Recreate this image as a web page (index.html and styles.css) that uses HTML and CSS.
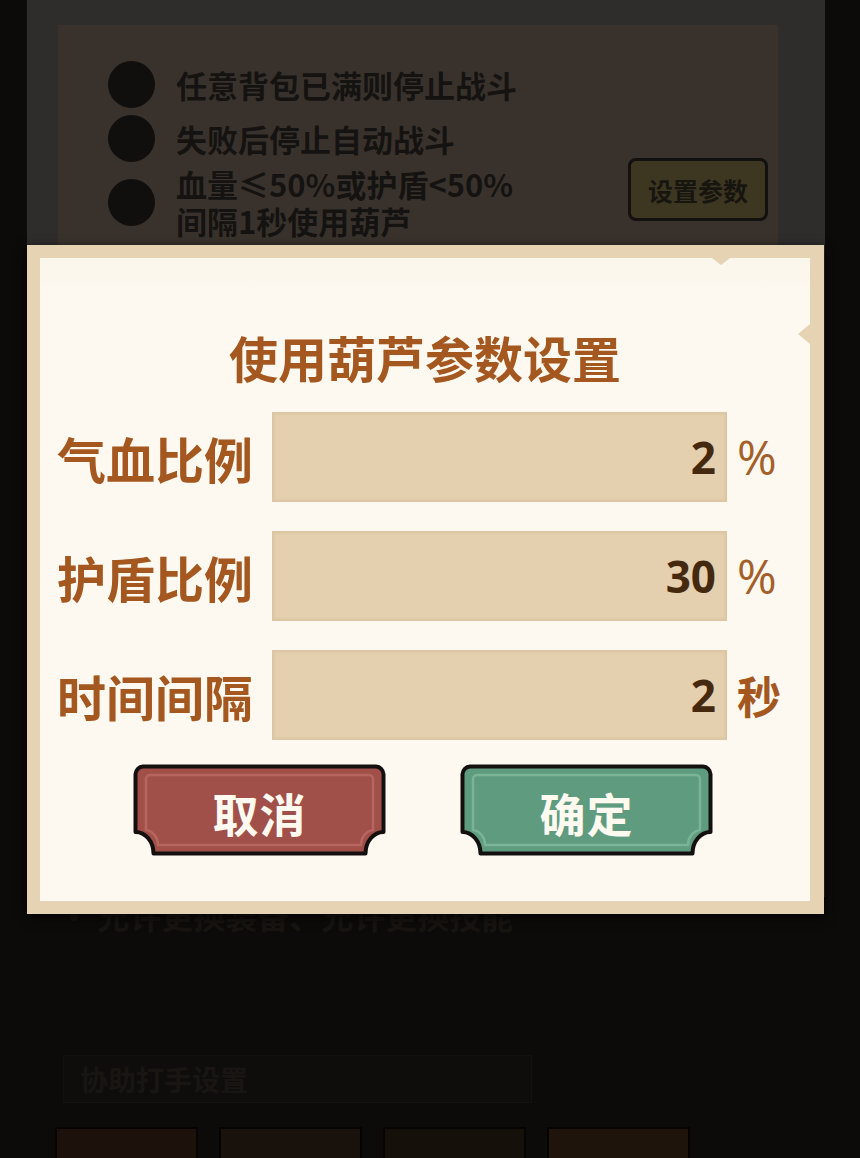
FILE: index.html
```html
<!DOCTYPE html>
<html lang="zh-CN">
<head>
<meta charset="utf-8">
<title>使用葫芦参数设置</title>
<link rel="stylesheet" href="styles.css">
</head>
<body>
<div class="screen">
  <div class="bg-top">
    <div class="panel">
      <div class="opts">
        <div class="opt"><span class="dot"></span><span class="opt-text">任意背包已满则停止战斗</span></div>
        <div class="opt"><span class="dot"></span><span class="opt-text">失败后停止自动战斗</span></div>
        <div class="opt"><span class="dot"></span><span class="opt-text"><span class="ln">血量≤50%或护盾&lt;50%</span><span class="ln">间隔1秒使用葫芦</span></span></div>
      </div>
      <div class="set-btn">设置参数</div>
    </div>
  </div>
  <div class="bg-bottom">
    <div class="faint-line">· 允许更换装备、允许更换技能</div>
    <div class="assist">协助打手设置</div>
    <div class="tabs">
      <div class="tab t1"></div>
      <div class="tab t2"></div>
      <div class="tab t3"></div>
      <div class="tab t4"></div>
    </div>
  </div>

  <div class="modal">
    <div class="sheet">
      <span class="chip chip-top"></span>
      <span class="chip chip-right"></span>
      <h1 class="title">使用葫芦参数设置</h1>
      <div class="rows">
        <div class="row">
          <div class="label">气血比例</div>
          <div class="field">2</div>
          <div class="unit">%</div>
        </div>
        <div class="row">
          <div class="label">护盾比例</div>
          <div class="field">30</div>
          <div class="unit">%</div>
        </div>
        <div class="row">
          <div class="label">时间间隔</div>
          <div class="field">2</div>
          <div class="unit unit-cjk">秒</div>
        </div>
      </div>
      <div class="actions">
        <div class="btn btn-cancel">
          <svg viewBox="0 0 253 92" preserveAspectRatio="none" aria-hidden="true">
            <path class="btn-face" d="M10 2.5H243A8 8 0 0 1 250.5 10V68A18 21.5 0 0 0 232.5 89.5H20.5A18 21.5 0 0 0 2.5 68V10A8 8 0 0 1 10 2.5Z"/>
            <path class="btn-hi" d="M17 11H236A4 4 0 0 1 240 15V66A14 15 0 0 0 228 81H25A14 15 0 0 0 13 66V15A4 4 0 0 1 17 11Z"/>
          </svg>
          <span>取消</span>
        </div>
        <div class="btn btn-ok">
          <svg viewBox="0 0 253 92" preserveAspectRatio="none" aria-hidden="true">
            <path class="btn-face" d="M10 2.5H243A8 8 0 0 1 250.5 10V68A18 21.5 0 0 0 232.5 89.5H20.5A18 21.5 0 0 0 2.5 68V10A8 8 0 0 1 10 2.5Z"/>
            <path class="btn-hi" d="M17 11H236A4 4 0 0 1 240 15V66A14 15 0 0 0 228 81H25A14 15 0 0 0 13 66V15A4 4 0 0 1 17 11Z"/>
          </svg>
          <span>确定</span>
        </div>
      </div>
    </div>
  </div>
</div>
</body>
</html>
```

FILE: styles.css
```css
html, body {
  margin: 0;
  padding: 0;
}

body {
  background: #0d0b0a;
  font-family: "Noto Sans CJK SC", "Noto Sans", sans-serif;
}

.screen {
  position: relative;
  width: 860px;
  height: 1158px;
  overflow: hidden;
}

/* ---------- dimmed page behind the dialog ---------- */
.bg-top {
  margin: 0 35px 0 27px;
  height: 897px;
  background: #2f2d2b;
  padding-top: 25px;
  box-sizing: border-box;
}

.panel {
  margin-left: 31px;
  width: 720px;
  height: 420px;
  background: #39322c;
  display: flex;
  padding: 32px 10px 0 50px;
  box-sizing: border-box;
}

.opts {
  flex: 1;
  display: flex;
  flex-direction: column;
}

.opt {
  display: flex;
  align-items: center;
  min-height: 54px;
  gap: 21px;
}

.dot {
  flex: none;
  width: 47px;
  height: 47px;
  border-radius: 50%;
  background: #100f0e;
}

.opt-text {
  display: flex;
  flex-direction: column;
  font-size: 31px;
  font-weight: 700;
  line-height: 37px;
  color: #151311;
}

.ln {
  display: block;
  height: 37px;
}

.set-btn {
  align-self: flex-start;
  margin-top: 101px;
  width: 140px;
  height: 63px;
  box-sizing: border-box;
  border: 3px solid #121110;
  border-radius: 8px;
  background: #3d3621;
  display: flex;
  align-items: center;
  justify-content: center;
  font-size: 25px;
  font-weight: 700;
  color: #17150f;
}

.faint-line {
  margin: 0 0 0 58px;
  font-size: 32px;
  line-height: 37px;
  font-weight: 700;
  color: #171411;
}

.assist {
  margin: 121px 0 0 63px;
  width: 469px;
  height: 48px;
  box-sizing: border-box;
  border: 1px solid #141210;
  background: #0f0d0c;
  display: flex;
  align-items: center;
  padding-left: 16px;
  font-size: 28px;
  font-weight: 700;
  color: #181513;
}

.tabs {
  display: flex;
  gap: 21px;
  margin: 24px 0 0 55px;
}

.tab {
  width: 143px;
  height: 45px;
  box-sizing: border-box;
  border: 2px solid #050403;
  background: #1c120b;
}

.tab.t2 { background: #19120c; }
.tab.t3 { background: #16100b; }
.tab.t4 { background: #1f140c; }

/* ---------- dialog ---------- */
.modal {
  position: absolute;
  left: 27px;
  top: 245px;
  width: 797px;
  height: 669px;
  box-sizing: border-box;
  padding: 13px 14px 13px 13px;
  background: #e6d3b4;
  box-shadow: 0 3px 10px rgba(0, 0, 0, 0.8);
}

.sheet {
  position: relative;
  height: 100%;
  box-sizing: border-box;
  padding-top: 71px;
  background: linear-gradient(#fbf6ec 0, #fdf9f0 34px, #fdf9f0 100%);
  display: flex;
  flex-direction: column;
}

.chip {
  position: absolute;
  width: 0;
  height: 0;
}

.chip-top {
  left: 672px;
  top: 0;
  border-left: 9px solid transparent;
  border-right: 9px solid transparent;
  border-top: 7px solid #e6d3b4;
}

.chip-right {
  right: 0;
  top: 66px;
  border-top: 10px solid transparent;
  border-bottom: 10px solid transparent;
  border-right: 12px solid #e6d3b4;
}

.title {
  margin: 0;
  text-align: center;
  font-size: 49px;
  line-height: 56px;
  font-weight: 700;
  color: #a4571f;
}

.rows {
  margin-top: 27px;
  padding-left: 17px;
  display: flex;
  flex-direction: column;
  gap: 29px;
}

.row {
  display: flex;
  align-items: center;
  height: 90px;
}

.label {
  flex: none;
  width: 196px;
  white-space: nowrap;
  font-size: 49px;
  line-height: 1;
  font-weight: 700;
  color: #a4571f;
}

.field {
  flex: none;
  margin-left: 19px;
  width: 455px;
  height: 90px;
  box-sizing: border-box;
  padding-right: 10px;
  background: #e4cfae;
  border: 1px solid #dcc6a3;
  box-shadow: inset 0 0 3px rgba(160, 120, 70, 0.25);
  display: flex;
  align-items: center;
  justify-content: flex-end;
  font-family: "Open Sans", "Noto Sans CJK SC", sans-serif;
  font-size: 44px;
  font-weight: 700;
  color: #44290f;
}

.unit {
  margin-left: 10px;
  font-family: "Open Sans", "Noto Sans CJK SC", sans-serif;
  font-size: 48px;
  line-height: 1;
  font-weight: 500;
  color: #a3602a;
}

.unit-cjk {
  font-family: "Noto Sans CJK SC", sans-serif;
  font-size: 44px;
  font-weight: 700;
  color: #a4571f;
}

.actions {
  margin-top: 24px;
  padding-left: 93px;
  display: flex;
  gap: 74px;
}

.btn {
  position: relative;
  width: 253px;
  height: 92px;
  display: flex;
  align-items: center;
  justify-content: center;
  font-size: 46px;
  font-weight: 700;
  color: #fff9f0;
}

.btn svg {
  position: absolute;
  left: 0;
  top: 0;
  width: 100%;
  height: 100%;
}

.btn span {
  position: relative;
  margin-top: 4px;
  letter-spacing: 1px;
}

.btn-face {
  stroke: #141010;
  stroke-width: 4;
  stroke-linejoin: round;
}

.btn-hi {
  fill: none;
  stroke-width: 2.5;
}

.btn-cancel .btn-face { fill: #a04f49; }
.btn-cancel .btn-hi { stroke: #b6665f; }

.btn-ok .btn-face { fill: #5f9c7f; }
.btn-ok .btn-hi { stroke: #7ab497; }
```
